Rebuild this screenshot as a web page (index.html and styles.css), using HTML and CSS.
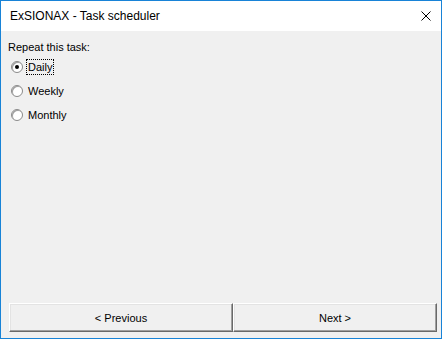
FILE: index.html
```html
<!DOCTYPE html>
<html lang="en">
<head>
  <meta charset="UTF-8">
  <title>Task scheduler</title>
  <link rel="stylesheet" href="styles.css">
</head>
<body>
  <div class="window">
    <div class="titlebar">
      <span class="title">ExSIONAX - Task scheduler</span>
      <svg class="close" width="10" height="10" viewBox="0 0 10 10">
        <path d="M0.5 0.5 L9.5 9.5 M9.5 0.5 L0.5 9.5" stroke="#000" stroke-width="1" fill="none"/>
      </svg>
    </div>

    <div class="content">
      <div class="label">Repeat this task:</div>
      <div class="option">
        <span class="radio checked"></span>
        <span class="text focus">Daily</span>
      </div>
      <div class="option">
        <span class="radio"></span>
        <span class="text">Weekly</span>
      </div>
      <div class="option">
        <span class="radio"></span>
        <span class="text">Monthly</span>
      </div>
    </div>

    <div class="footer">
      <button class="btn btn-prev">&lt; Previous</button>
      <button class="btn btn-next">Next &gt;</button>
    </div>
  </div>
</body>
</html>
```

FILE: styles.css
```css
* {
  box-sizing: border-box;
}

body {
  margin: 0;
  font-family: 'Liberation Sans', Arial, sans-serif;
  font-size: 11px;
  color: #000;
}

.window {
  width: 442px;
  height: 339px;
  border: 1px solid #1883d7;
  display: flex;
  flex-direction: column;
  background: #f0f0f0;
}

.titlebar {
  height: 30px;
  background: #fff;
  display: flex;
  align-items: center;
  justify-content: space-between;
  padding: 0 9px 0 9px;
}

.title {
  font-family: 'Liberation Sans', Arial, sans-serif;
  font-size: 12px;
}

.close {
  display: block;
  margin-right: 1px;
}

.content {
  flex: 1;
  padding: 8px 7px 0 7px;
}

.label {
  height: 16px;
  line-height: 16px;
}

.option {
  display: flex;
  align-items: center;
  height: 24px;
  padding-left: 3px;
}

.radio {
  width: 12px;
  height: 12px;
  border-radius: 50%;
  border: 1px solid #8a8a8a;
  background: #fff;
  box-shadow: inset 1px 1px 0 #a0a0a0;
  position: relative;
  margin-right: 3px;
}

.radio.checked::after {
  content: "";
  position: absolute;
  width: 4px;
  height: 4px;
  border-radius: 50%;
  background: #000;
  left: 3px;
  top: 3px;
}

.text {
  padding: 1px 1px;
  border: 1px dotted transparent;
}

.text.focus {
  border-color: #000;
}

.footer {
  display: flex;
  padding: 0 4px 6px 8px;
}

.btn {
  font-family: 'Liberation Sans', Arial, sans-serif;
  font-size: 11px;
  height: 29px;
  background: #f0f0f0;
  border: 1px solid;
  border-color: #fff #696969 #696969 #fff;
  box-shadow: inset -1px -1px 0 #a0a0a0, inset 1px 1px 0 #e3e3e3;
  padding: 0;
  margin: 0;
}

.btn-prev {
  width: 224px;
}

.btn-next {
  width: 204px;
}
```
